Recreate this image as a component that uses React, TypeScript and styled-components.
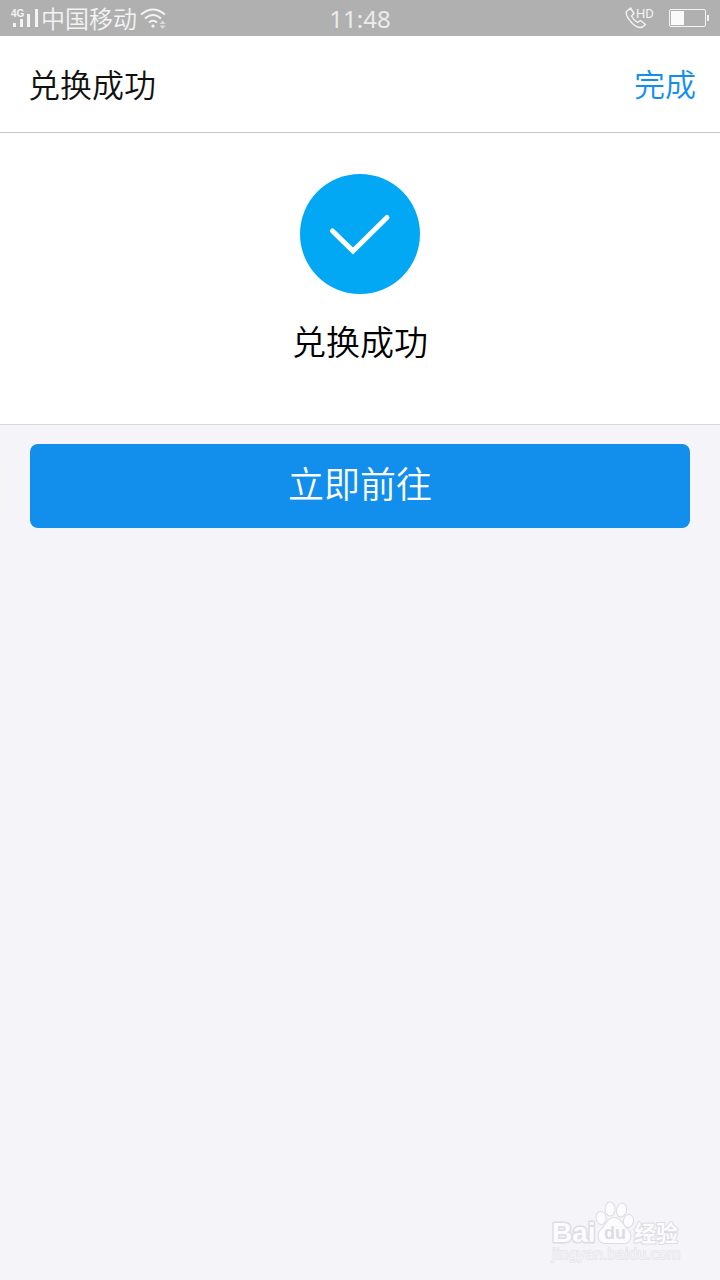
import React from "react";
import styled, { createGlobalStyle } from "styled-components";

const GlobalStyle = createGlobalStyle`
  *, *::before, *::after { box-sizing: border-box; }
  body {
    margin: 0;
    background: #f4f4f9;
    font-family: "Noto Sans CJK SC", sans-serif;
    font-weight: 350;
  }
  h1, p { margin: 0; }
  svg { display: block; }
`;

const Page = styled.div`
  position: relative;
  min-height: 100vh;
  display: flex;
  flex-direction: column;
`;

const StatusBar = styled.div`
  display: grid;
  grid-template-columns: 1fr auto 1fr;
  align-items: center;
  height: 36px;
  padding: 0 10px 2px;
  background: #b0b0b0;
  color: #f3f3f3;
  font-size: 24px;
  line-height: 34px;
`;

const StatusGroup = styled.div<{ $end?: boolean }>`
  display: flex;
  align-items: center;
  justify-content: ${(p) => (p.$end ? "flex-end" : "flex-start")};
  gap: ${(p) => (p.$end ? "12px" : "3px")};
`;

const Clock = styled.time`
  font-family: "Noto Sans", sans-serif;
  font-weight: 400;
  color: #ececec;
  padding-top: 2px;
`;

const Header = styled.header`
  display: flex;
  align-items: center;
  justify-content: space-between;
  height: 97px;
  padding: 0 24px 2px 28px;
  background: #fff;
  border-bottom: 1px solid #c8c8c8;
`;

const Title = styled.h1`
  color: #111;
  font-size: 32px;
  line-height: 48px;
  font-weight: 350;
`;

const DoneButton = styled.button`
  padding: 0;
  border: 0;
  background: none;
  color: #128eec;
  font: inherit;
  font-size: 31px;
  line-height: 48px;
  cursor: pointer;
`;

const Result = styled.section`
  display: flex;
  flex-direction: column;
  align-items: center;
  gap: 22px;
  padding: 41px 0 58px;
  background: #fff;
  border-bottom: 1px solid #d9d9dc;
`;

const ResultText = styled.p`
  color: #000;
  font-size: 34px;
  line-height: 50px;
`;

const Actions = styled.div`
  display: flex;
  padding: 19px 30px;
`;

const PrimaryButton = styled.button`
  flex: 1;
  height: 84px;
  padding: 0 0 8px;
  border: 0;
  border-radius: 8px;
  background: #128eec;
  color: #fff;
  font: inherit;
  font-size: 36px;
  line-height: 52px;
  cursor: pointer;
`;

const Watermark = styled.div`
  position: absolute;
  right: 36px;
  bottom: 12px;
`;

const SignalIcon = () => (
  <svg width="28" height="24" viewBox="0 0 28 24" fill="#f3f3f3" aria-label="4G">
    <text x="1" y="11" fontFamily="Liberation Sans, sans-serif" fontSize="10" fontWeight="700">4G</text>
    <path d="M3 17h3v4H3zM10 13h3v8h-3zM17 8h3v13h-3zM25 3h3v18h-3z" />
  </svg>
);

const WifiIcon = () => (
  <svg width="26" height="24" viewBox="0 0 26 24" fill="none" stroke="#f3f3f3" strokeWidth="2" aria-label="Wi-Fi">
    <path d="M1 8.500Q13 -1.500 25 8.500M5 12.500Q13 5.500 21 12.500M9 16.500Q13 13 17 16.500" />
    <circle cx="13" cy="20" r="1.600" fill="#f3f3f3" stroke="none" />
    <path d="M19.500 18l3-3.500 3 3.500zM19.500 19.500l3 3.500 3-3.500z" fill="#dadada" stroke="none" />
  </svg>
);

const CallHdIcon = () => (
  <svg width="32" height="26" viewBox="0 -1 32 26" fill="none" stroke="#f3f3f3" strokeWidth="1.400" aria-label="HD">
    <path d="M1.500 5.500L5.500 2L9 7.500L6.500 10Q8.500 14 12.500 16.500L15.500 14.500L20.500 18.500L17.500 21Q13 23 7 17Q0 9.500 1.500 5.500Z" strokeLinejoin="round" />
    <text x="11" y="12" fontFamily="Roboto, sans-serif" fontSize="13" fontWeight="400" fill="#f3f3f3" stroke="none">HD</text>
  </svg>
);

const BatteryIcon = () => (
  <svg width="41" height="20" viewBox="0 0 41 20" aria-label="Battery">
    <rect x="0.500" y="1.500" width="36" height="17" rx="1.500" fill="none" stroke="#f3f3f3" />
    <rect x="2" y="3" width="13" height="14" fill="#fafafa" />
    <rect x="38" y="7" width="2" height="6" fill="#f3f3f3" />
  </svg>
);

const SuccessIcon = () => (
  <svg width="120" height="120" viewBox="0 0 120 120" aria-hidden="true">
    <circle cx="60" cy="60" r="60" fill="#02a8f3" />
    <path d="M32.500 57L53 77L87 43.500" fill="none" stroke="#fff" strokeWidth="5" strokeLinecap="round" />
  </svg>
);

const BaiduLogo = () => (
  <svg
    width="134"
    height="68"
    viewBox="0 0 134 68"
    fill="#fcfcfe"
    stroke="#dcdce1"
    strokeWidth="2"
    paintOrder="stroke"
    strokeLinejoin="round"
    fontFamily="Liberation Sans, sans-serif"
    aria-label="Baidu"
  >
    <text x="2" y="42" fontSize="28" fontWeight="700" strokeWidth="3">Bai</text>
    <g strokeWidth="2">
      <ellipse cx="51" cy="18" rx="4.500" ry="6" transform="rotate(-8 51 18)" />
      <ellipse cx="60" cy="9" rx="4.500" ry="6.500" />
      <ellipse cx="71.500" cy="10" rx="4.500" ry="6.500" transform="rotate(10 71.500 10)" />
      <ellipse cx="78.500" cy="21" rx="4.500" ry="6" transform="rotate(10 78.500 21)" />
      <path d="M64 18C58 18 56 25 52 29C47 33 47 43 56 43H74C82 43 82 33 77 29C72 25 71 18 64 18Z" />
    </g>
    <text x="54" y="39" fontSize="18" fontWeight="700" fill="#dcdce1" stroke="none">du</text>
    <text x="84" y="41" fontSize="22" fontWeight="700" fontFamily="Noto Sans CJK SC, sans-serif">经验</text>
    <text x="2" y="59" fontSize="14" fontFamily="DejaVu Sans, sans-serif" stroke="#e6e6eb">jingyan.baidu.com</text>
  </svg>
);

export default function App() {
  return (
    <>
      <GlobalStyle />
      <Page>
        <StatusBar>
          <StatusGroup>
            <SignalIcon />
            <span>中国移动</span>
            <WifiIcon />
          </StatusGroup>
          <Clock>11:48</Clock>
          <StatusGroup $end>
            <CallHdIcon />
            <BatteryIcon />
          </StatusGroup>
        </StatusBar>
        <Header>
          <Title>兑换成功</Title>
          <DoneButton type="button">完成</DoneButton>
        </Header>
        <main>
          <Result>
            <SuccessIcon />
            <ResultText>兑换成功</ResultText>
          </Result>
          <Actions>
            <PrimaryButton type="button">立即前往</PrimaryButton>
          </Actions>
        </main>
        <Watermark>
          <BaiduLogo />
        </Watermark>
      </Page>
    </>
  );
}
